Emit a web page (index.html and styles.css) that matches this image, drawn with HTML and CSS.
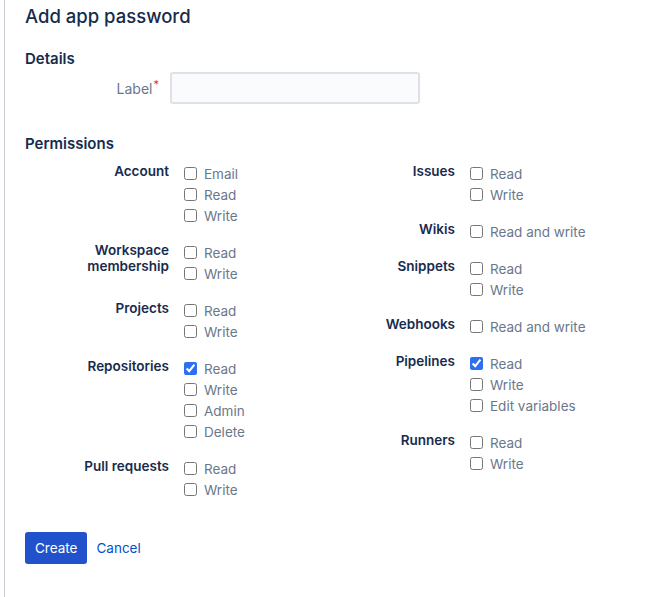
FILE: index.html
```html
<!DOCTYPE html>
<html lang="en">
<head>
  <meta charset="UTF-8">
  <title>Add app password</title>
  <link rel="stylesheet" href="styles.css">
</head>
<body>
  <div class="page">
    <h1>Add app password</h1>

    <h3>Details</h3>
    <div class="field">
      <label for="label">Label<span class="req">*</span></label>
      <input type="text" id="label">
    </div>

    <h3 class="perm-title">Permissions</h3>
    <div class="perms">
      <div class="col">
        <div class="group">
          <div class="group-label">Account</div>
          <div class="items">
            <label><input type="checkbox"> Email</label>
            <label><input type="checkbox"> Read</label>
            <label><input type="checkbox"> Write</label>
          </div>
        </div>
        <div class="group">
          <div class="group-label">Workspace membership</div>
          <div class="items">
            <label><input type="checkbox"> Read</label>
            <label><input type="checkbox"> Write</label>
          </div>
        </div>
        <div class="group">
          <div class="group-label">Projects</div>
          <div class="items">
            <label><input type="checkbox"> Read</label>
            <label><input type="checkbox"> Write</label>
          </div>
        </div>
        <div class="group">
          <div class="group-label">Repositories</div>
          <div class="items">
            <label><input type="checkbox" checked> Read</label>
            <label><input type="checkbox"> Write</label>
            <label><input type="checkbox"> Admin</label>
            <label><input type="checkbox"> Delete</label>
          </div>
        </div>
        <div class="group">
          <div class="group-label">Pull requests</div>
          <div class="items">
            <label><input type="checkbox"> Read</label>
            <label><input type="checkbox"> Write</label>
          </div>
        </div>
      </div>

      <div class="col">
        <div class="group">
          <div class="group-label">Issues</div>
          <div class="items">
            <label><input type="checkbox"> Read</label>
            <label><input type="checkbox"> Write</label>
          </div>
        </div>
        <div class="group">
          <div class="group-label">Wikis</div>
          <div class="items">
            <label><input type="checkbox"> Read and write</label>
          </div>
        </div>
        <div class="group">
          <div class="group-label">Snippets</div>
          <div class="items">
            <label><input type="checkbox"> Read</label>
            <label><input type="checkbox"> Write</label>
          </div>
        </div>
        <div class="group">
          <div class="group-label">Webhooks</div>
          <div class="items">
            <label><input type="checkbox"> Read and write</label>
          </div>
        </div>
        <div class="group">
          <div class="group-label">Pipelines</div>
          <div class="items">
            <label><input type="checkbox" checked> Read</label>
            <label><input type="checkbox"> Write</label>
            <label><input type="checkbox"> Edit variables</label>
          </div>
        </div>
        <div class="group">
          <div class="group-label">Runners</div>
          <div class="items">
            <label><input type="checkbox"> Read</label>
            <label><input type="checkbox"> Write</label>
          </div>
        </div>
      </div>
    </div>

    <div class="actions">
      <button class="btn-primary">Create</button>
      <a href="#" class="cancel">Cancel</a>
    </div>
  </div>
</body>
</html>
```

FILE: styles.css
```css
body {
  margin: 0;
  font-family: Inter, "Noto Sans", sans-serif;
  color: #172b4d;
  background: white;
}
.page {
  margin-left: 4px;
  min-height: 597px;
  box-sizing: border-box;
  border-left: 1px solid #c9cdd3;
  padding: 4px 0 0 20px;
}
h1 {
  margin: 0;
  font-size: 18.5px;
  font-weight: 500;
  line-height: 25px;
}
h3 {
  margin: 20px 0 0;
  font-size: 15px;
  font-weight: 600;
  line-height: 20px;
}
.field {
  display: flex;
  align-items: center;
  margin-top: 3px;
}
.field label {
  width: 134px;
  margin-right: 11px;
  text-align: right;
  font-size: 14px;
  color: #6b778c;
}
.req {
  color: #de350b;
  font-size: 11px;
  vertical-align: top;
  position: relative;
  top: -3px;
  margin-left: 1px;
}
.field input {
  width: 250px;
  height: 32px;
  box-sizing: border-box;
  border: 2px solid #dfe1e6;
  border-radius: 3px;
  background: #fafbfc;
}
.perm-title {
  margin-top: 30px;
}
.perms {
  display: grid;
  grid-template-columns: 286px 286px;
  margin-top: 9px;
}
.group {
  display: flex;
  margin-bottom: 16px;
}
.group-label {
  width: 144px;
  margin-right: 15px;
  text-align: right;
  font-size: 13.5px;
  font-weight: 600;
  line-height: 16px;
}
.items label {
  display: flex;
  align-items: center;
  height: 21px;
  font-size: 13.5px;
  color: #6b778c;
}
.items input {
  width: 13px;
  height: 13px;
  margin: 0 7px 0 0;
  accent-color: #2e6ff2;
}
.actions {
  display: flex;
  align-items: center;
  margin-top: 16px;
}
.btn-primary {
  height: 32px;
  padding: 0 10px;
  background: #2152cc;
  color: white;
  border: none;
  border-radius: 3px;
  font-family: inherit;
  font-size: 13.5px;
}
.cancel {
  margin-left: 9px;
  color: #0052cc;
  text-decoration: none;
  font-size: 13.5px;
}
```
